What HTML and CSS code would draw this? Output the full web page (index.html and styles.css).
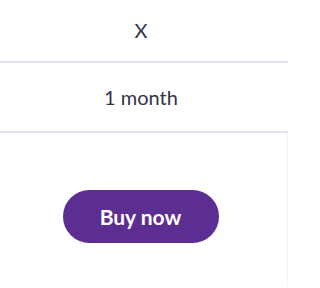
FILE: index.html
```html
<!DOCTYPE html>
<html>
<head>
<meta charset="utf-8">
<link rel="stylesheet" href="styles.css">
</head>
<body>
<div class="plan">
  <div class="row row-first">X</div>
  <div class="row">1 month</div>
  <div class="cta">
    <button class="buy">Buy now</button>
  </div>
</div>
</body>
</html>
```
FILE: styles.css
```css
html, body {
  margin: 0;
  padding: 0;
  background: #ffffff;
}
body {
  font-family: Lato, "Noto Sans", sans-serif;
  color: #33334a;
}
.plan {
  width: 288px;
  display: flex;
  flex-direction: column;
}
.row {
  height: 68px;
  display: flex;
  align-items: center;
  justify-content: center;
  padding-right: 6px;
  font-size: 20px;
  border-bottom: 2px solid #e2e2ec;
}
.row-first {
  height: 63px;
  padding-bottom: 2px;
  box-sizing: border-box;
}
.cta {
  display: flex;
  justify-content: center;
  padding-top: 57px;
  padding-right: 6px;
  border-right: 1px solid #f3f3f6;
  height: 153px;
  box-sizing: border-box;
}
.buy {
  width: 156px;
  height: 53px;
  border: none;
  border-radius: 27px;
  background: #5c2e91;
  color: #ffffff;
  font-family: Lato, "Noto Sans", sans-serif;
  font-weight: 700;
  font-size: 21px;
  padding: 0;
}
```
